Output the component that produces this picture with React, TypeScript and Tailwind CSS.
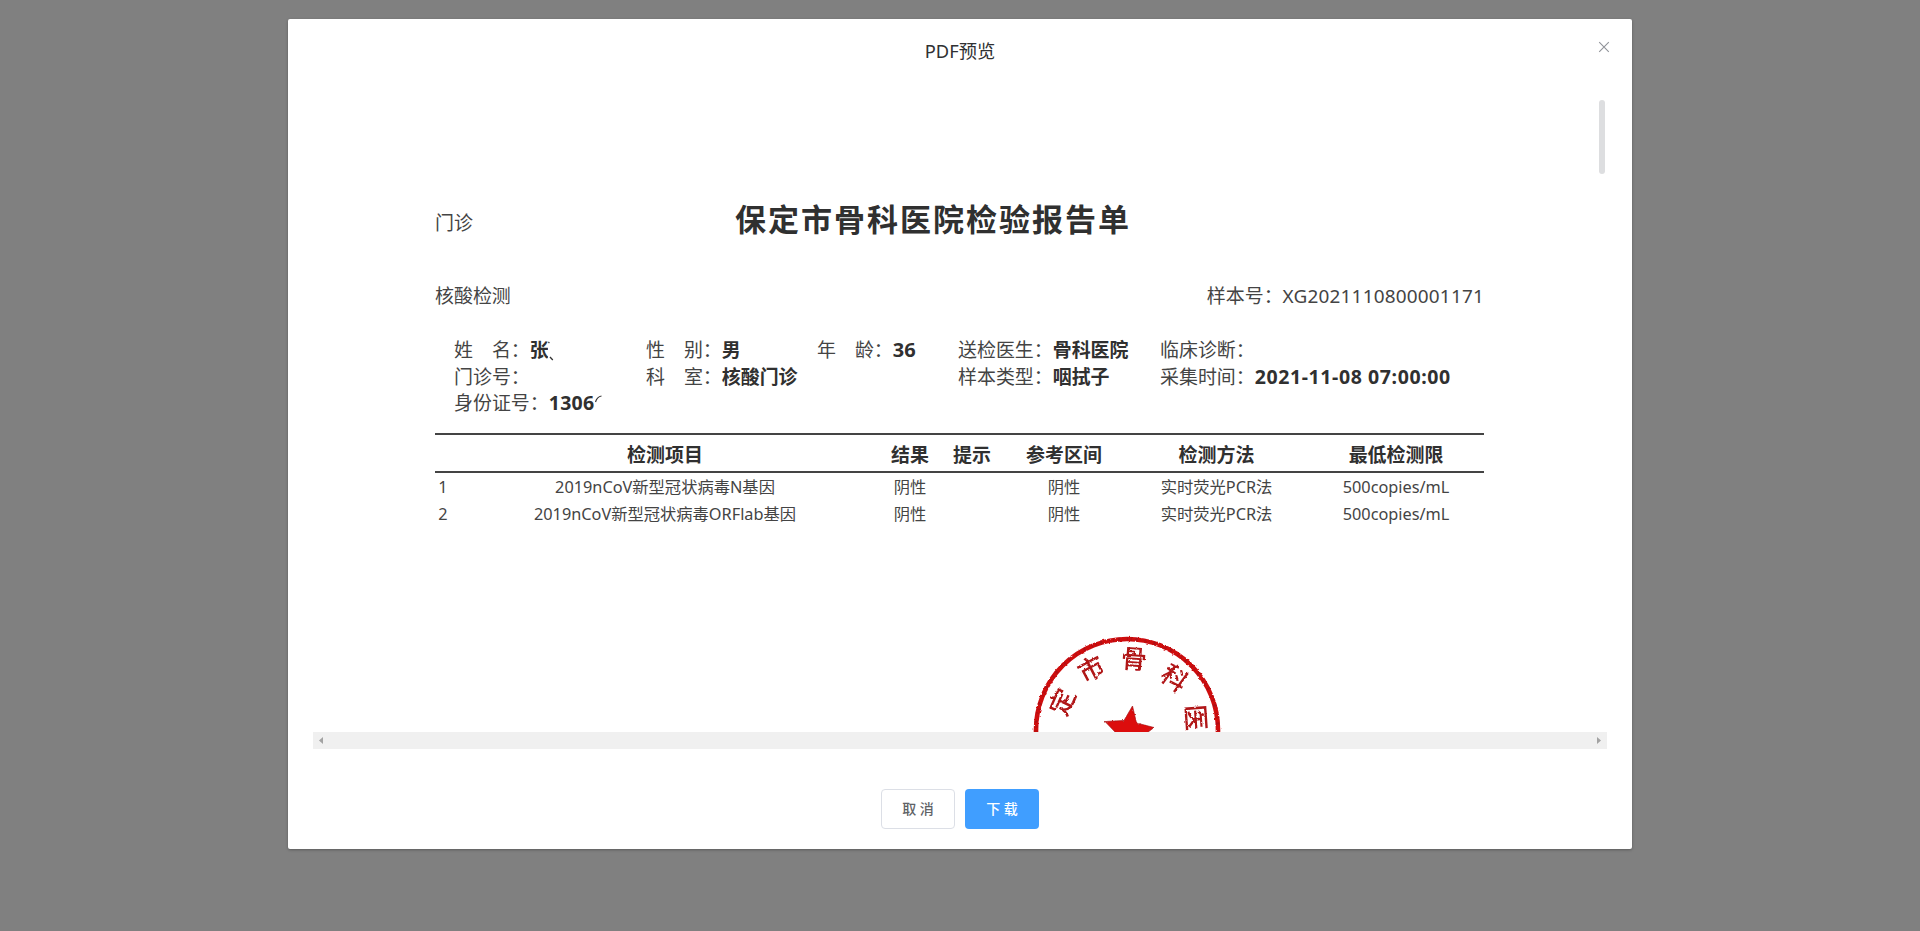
import React from "react";

type Field = { label: string; value?: React.ReactNode };

const fields: (Field | null)[][] = [
  [
    {
      label: "姓　名：",
      value: (
        <span className="inline-flex">
          <span className="w-[18px] overflow-hidden">张</span>
          <svg className="h-[26px] w-[6px]" viewBox="0 0 6 26">
            <path d="M.5 6l.8-1M2 20l2.800 3" stroke="#333" strokeWidth="1.300" fill="none" />
          </svg>
        </span>
      ),
    },
    { label: "性　别：", value: "男" },
    { label: "年　龄：", value: <span className="text-[20px]">36</span> },
    { label: "送检医生：", value: "骨科医院" },
    { label: "临床诊断：" },
  ],
  [
    { label: "门诊号：" },
    { label: "科　室：", value: "核酸门诊" },
    null,
    { label: "样本类型：", value: "咽拭子" },
    { label: "采集时间：", value: <span className="text-[19.500px] tracking-[0.6px]">2021-11-08 07:00:00</span> },
  ],
  [
    {
      label: "身份证号：",
      value: (
        <span className="inline-flex text-[19.500px] tracking-[0.3px]">
          1306
          <svg className="h-[26px] w-[8px]" viewBox="0 0 8 26">
            <path d="M.5 12Q2 6.800 6.500 6" stroke="#333" strokeWidth="1.200" fill="none" />
          </svg>
        </span>
      ),
    },
  ],
];

const headers = ["", "检测项目", "结果", "提示", "参考区间", "检测方法", "最低检测限"];
const rows = [
  ["1", "2019nCoV新型冠状病毒N基因", "阴性", "", "阴性", "实时荧光PCR法", "500copies/mL"],
  ["2", "2019nCoV新型冠状病毒ORFlab基因", "阴性", "", "阴性", "实时荧光PCR法", "500copies/mL"],
];
const columns = "grid grid-cols-[16px_428px_62px_62px_122px_183px_176px]";

const sealChars = [
  { c: "定", x: 62, y: 91.7, r: -66 },
  { c: "市", x: 91, y: 58.5, r: -28 },
  { c: "骨", x: 134, y: 48.5, r: 4 },
  { c: "科", x: 175, y: 67.5, r: 36 },
  { c: "医", x: 196.5, y: 107.5, r: 86 },
];

function Seal() {
  return (
    <svg className="block h-[122px] w-[260px]" viewBox="0 0 260 122">
      <defs>
        <filter id="ink" x="0" y="0" width="260" height="150" filterUnits="userSpaceOnUse">
          <feTurbulence type="fractalNoise" baseFrequency="0.35" numOctaves="2" seed="4" result="n" />
          <feDisplacementMap in="SourceGraphic" in2="n" scale="2.5" xChannelSelector="R" yChannelSelector="G" />
        </filter>
      </defs>
      <g filter="url(#ink)">
        <circle cx="127" cy="120" r="91" fill="none" stroke="#cf0a10" strokeWidth="4.600" />
        <circle
          cx="127"
          cy="120"
          r="91"
          fill="none"
          stroke="#7d1518"
          strokeWidth="3.500"
          strokeDasharray="1 4 2 7 1 3"
          opacity="0.4"
        />
        {sealChars.map((s) => (
          <text
            key={s.c}
            transform={`translate(${s.x} ${s.y}) rotate(${s.r})`}
            textAnchor="middle"
            dominantBaseline="central"
            fontSize="26"
            fontWeight="500"
            fill="#b01419"
          >
            {s.c}
          </text>
        ))}
        <path
          d="M132.500 96L136.500 113L154 117.500L143 126L142 144L128 135L113 141L117 124L105 111.500L124 110.500Z"
          fill="#dc0a0e"
          stroke="#a5181a"
          strokeWidth="0.700"
        />
      </g>
    </svg>
  );
}

function Report() {
  return (
    <div className="ml-[122px] w-[1049px] pt-[115px] text-[18.950px] leading-[26px] text-[#444]">
      <div className="flex h-[50px] items-center">
        <span className="mt-[7px] w-[300px]">门诊</span>
        <h1 className="text-[31px] leading-[50px] font-bold tracking-[2px] whitespace-nowrap text-[#303030]">
          保定市骨科医院检验报告单
        </h1>
      </div>
      <div className="mt-[39px] flex justify-between">
        <span>核酸检测</span>
        <span>
          样本号：<span className="tracking-[0.2px]">XG2021110800001171</span>
        </span>
      </div>
      <div className="mt-[28px] ml-[19px]">
        {fields.map((row, i) => (
          <div key={i} className="grid h-[26.500px] grid-cols-[192px_171px_141px_202px_320px] whitespace-nowrap">
            {row.map((f, j) => (
              <div key={j} className="flex">
                {f && <span>{f.label}</span>}
                {f && <b className="font-bold text-[#303030]">{f.value}</b>}
              </div>
            ))}
          </div>
        ))}
      </div>
      <div className={`${columns} mt-[16.500px] h-[40px] border-y-2 border-[#444] text-center leading-[40px] font-bold text-[#303030]`}>
        {headers.map((h, i) => (
          <span key={i}>{h}</span>
        ))}
      </div>
      {rows.map((r) => (
        <div key={r[0]} className={`${columns} h-[27px] text-center text-[16.300px] leading-[28px]`}>
          {r.map((c, i) => (
            <span key={i}>{c}</span>
          ))}
        </div>
      ))}
      <div className="mt-[83px] ml-[565px]">
        <Seal />
      </div>
    </div>
  );
}

export default function App() {
  return (
    <div className="h-[931px] overflow-hidden bg-[#808080] pt-[19px] font-['Noto_Sans','Noto_Sans_CJK_SC',sans-serif]">
      <div className="relative mx-auto flex h-[830px] w-[1344px] flex-col rounded-[2px] bg-white shadow-[0_1px_3px_rgba(0,0,0,0.3)]">
        <header className="flex h-[60px] items-center justify-center pt-[4px] text-[18.300px] leading-[24px] text-[#303133]">
          PDF预览
        </header>
        <button aria-label="Close" className="absolute top-[22px] right-[22px]">
          <svg className="block h-3 w-3" viewBox="0 0 12 12">
            <path d="M1.200 1.200l9.600 9.600M10.800 1.200l-9.600 9.600" stroke="#909399" strokeWidth="1.100" />
          </svg>
        </button>
        <div className="relative mx-[25px] h-[653px] overflow-hidden">
          <Report />
          <div className="absolute top-[21px] right-[2px] h-[74px] w-[6px] rounded-full bg-[#dddee0]" />
        </div>
        <div className="mx-[25px] flex h-[17px] items-center justify-between bg-[#f0f0f0] px-[6px]">
          <svg className="h-[7px] w-[4px]" viewBox="0 0 4 7">
            <path d="M4 0v7L0 3.500z" fill="#a3a3a3" />
          </svg>
          <svg className="h-[7px] w-[4px]" viewBox="0 0 4 7">
            <path d="M0 0v7L4 3.500z" fill="#a3a3a3" />
          </svg>
        </div>
        <footer className="mt-[40px] flex justify-center gap-[10px] text-[14px] font-medium">
          <button className="h-10 w-[74px] rounded-[4px] border border-[#dcdfe6] pb-[2px] text-[#606266]">取 消</button>
          <button className="h-10 w-[74px] rounded-[4px] bg-[#409eff] pb-[2px] text-white">下 载</button>
        </footer>
      </div>
    </div>
  );
}
